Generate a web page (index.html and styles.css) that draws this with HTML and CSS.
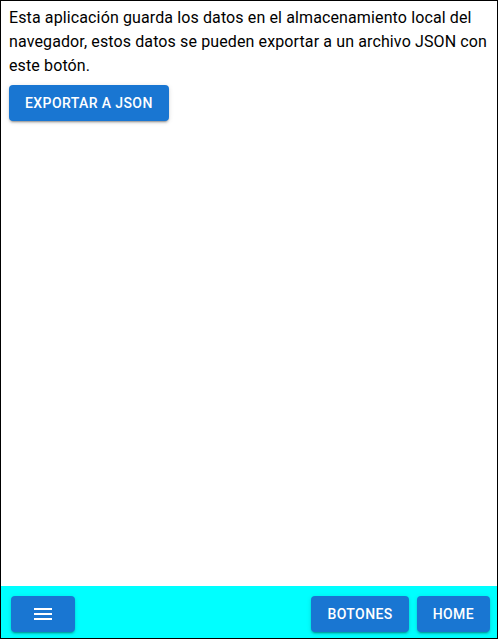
FILE: index.html
```html
<!DOCTYPE html>
<html lang="es">
<head>
<meta charset="utf-8">
<link rel="stylesheet" href="styles.css">
</head>
<body>
<div class="app">
  <main class="content">
    <p class="intro">Esta aplicación guarda los datos en el almacenamiento local del navegador, estos datos se pueden exportar a un archivo JSON con este botón.</p>
    <button class="btn">Exportar a JSON</button>
  </main>
  <footer class="bar">
    <button class="btn btn-menu" aria-label="menu">
      <svg width="24" height="24" viewBox="0 0 24 24"><path fill="#fff" d="M3 18h18v-2H3v2zm0-5h18v-2H3v2zm0-7v2h18V6H3z"/></svg>
    </button>
    <div class="spacer"></div>
    <button class="btn">Botones</button>
    <button class="btn">Home</button>
  </footer>
</div>
</body>
</html>
```
FILE: styles.css
```css
* { box-sizing: border-box; }
html, body { margin: 0; height: 100%; }
body {
  font-family: Roboto, "Noto Sans", sans-serif;
  color: #000;
  background: #fff;
}
.app {
  height: 100%;
  border: 1px solid #000;
  display: flex;
  flex-direction: column;
}
.content {
  flex: 1;
  padding: 5px 8px;
}
.intro {
  margin: 0 0 7px;
  font-size: 16px;
  line-height: 24px;
  letter-spacing: 0.12px;
}
.btn {
  height: 36px;
  padding: 0 16px;
  border: 0;
  border-radius: 4px;
  background: #1976d2;
  color: #fff;
  font-family: Roboto, sans-serif;
  font-size: 14px;
  font-weight: 500;
  letter-spacing: 0.4px;
  text-transform: uppercase;
  box-shadow: 0 3px 1px -2px rgba(0,0,0,.2), 0 2px 2px 0 rgba(0,0,0,.14), 0 1px 5px 0 rgba(0,0,0,.12);
  display: inline-flex;
  align-items: center;
  justify-content: center;
}
.bar {
  background: #00ffff;
  height: 52px;
  padding: 10px 7px 6px 10px;
  display: flex;
  gap: 8px;
}
.btn-menu {
  width: 64px;
  padding: 0;
}
.btn-menu svg { display: block; }
.spacer { flex: 1; }
```
